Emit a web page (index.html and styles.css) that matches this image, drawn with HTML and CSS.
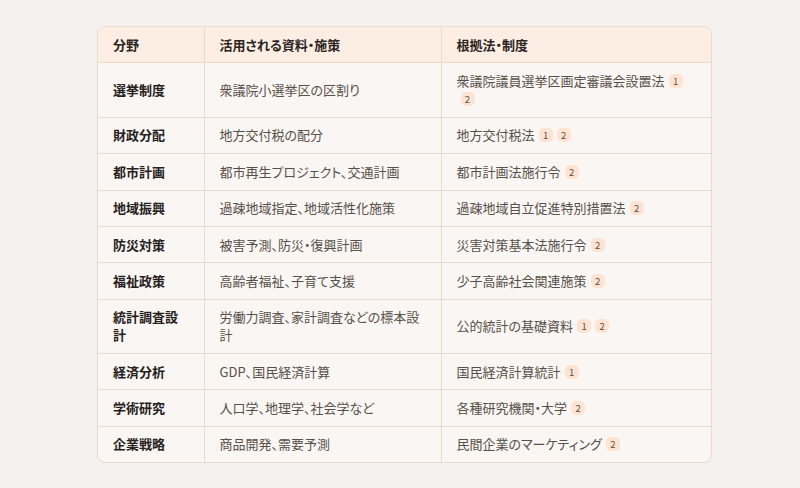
FILE: index.html
```html
<!DOCTYPE html>
<html lang="ja">
<head>
<meta charset="utf-8">
<link rel="stylesheet" href="styles.css">
</head>
<body>
<div class="wrap">
<table class="tbl">
<colgroup><col class="c1"><col class="c2"><col class="c3"></colgroup>
<thead>
<tr><th>分野</th><th>活用される資料・施策</th><th>根拠法・制度</th></tr>
</thead>
<tbody>
<tr><td class="k">選挙制度</td><td>衆議院小選挙区の区割り</td><td>衆議院議員選挙区画定審議会設置法<span class="b">1</span><span class="b">2</span></td></tr>
<tr><td class="k">財政分配</td><td>地方交付税の配分</td><td>地方交付税法<span class="b">1</span><span class="b">2</span></td></tr>
<tr><td class="k">都市計画</td><td>都市再生プロジェクト、交通計画</td><td>都市計画法施行令<span class="b">2</span></td></tr>
<tr><td class="k">地域振興</td><td>過疎地域指定、地域活性化施策</td><td>過疎地域自立促進特別措置法<span class="b">2</span></td></tr>
<tr><td class="k">防災対策</td><td>被害予測、防災・復興計画</td><td>災害対策基本法施行令<span class="b">2</span></td></tr>
<tr><td class="k">福祉政策</td><td>高齢者福祉、子育て支援</td><td>少子高齢社会関連施策<span class="b">2</span></td></tr>
<tr><td class="k">統計調査設計</td><td>労働力調査、家計調査などの標本設計</td><td>公的統計の基礎資料<span class="b">1</span><span class="b">2</span></td></tr>
<tr><td class="k">経済分析</td><td>GDP、国民経済計算</td><td>国民経済計算統計<span class="b">1</span></td></tr>
<tr><td class="k">学術研究</td><td>人口学、地理学、社会学など</td><td>各種研究機関・大学<span class="b">2</span></td></tr>
<tr><td class="k">企業戦略</td><td>商品開発、需要予測</td><td>民間企業のマーケティング<span class="b">2</span></td></tr>
</tbody>
</table>
</div>
</body>
</html>
```
FILE: styles.css
```css
html, body {
  margin: 0;
  background: #f5f1ee;
}
body {
  padding: 26px 0 0 97px;
  font-family: "Noto Sans CJK JP", "Noto Sans", sans-serif;
  font-size: 13px;
  font-feature-settings: "palt";
}
.wrap {
  width: 613px;
  border: 1px solid #ead9cd;
  border-radius: 8px;
  overflow: hidden;
  background: #faf6f3;
}
.tbl {
  width: 100%;
  border-collapse: collapse;
  table-layout: fixed;
}
.c1 { width: 106px; }
.c2 { width: 237px; }
.tbl th, .tbl td {
  padding: 8.7px 15px;
  line-height: 18px;
  text-align: left;
  vertical-align: middle;
  border-bottom: 1px solid #ead9cd;
  border-right: 1px solid #ead9cd;
}
.tbl th:last-child, .tbl td:last-child { border-right: none; }
.tbl tbody tr:last-child td { border-bottom: none; }
.tbl th {
  background: #fdeee4;
  color: #2b2622;
  font-weight: 700;
}
.tbl td {
  color: #57504a;
}
.tbl td.k {
  color: #26211d;
  font-weight: 700;
}
.b {
  display: inline-block;
  min-width: 6px;
  height: 14px;
  line-height: 14px;
  padding: 0 4px;
  margin-left: 4px;
  border-radius: 5px;
  background: #fde3d1;
  color: #5e5048;
  font-size: 9.5px;
  text-align: center;
  vertical-align: 1px;
}
```
